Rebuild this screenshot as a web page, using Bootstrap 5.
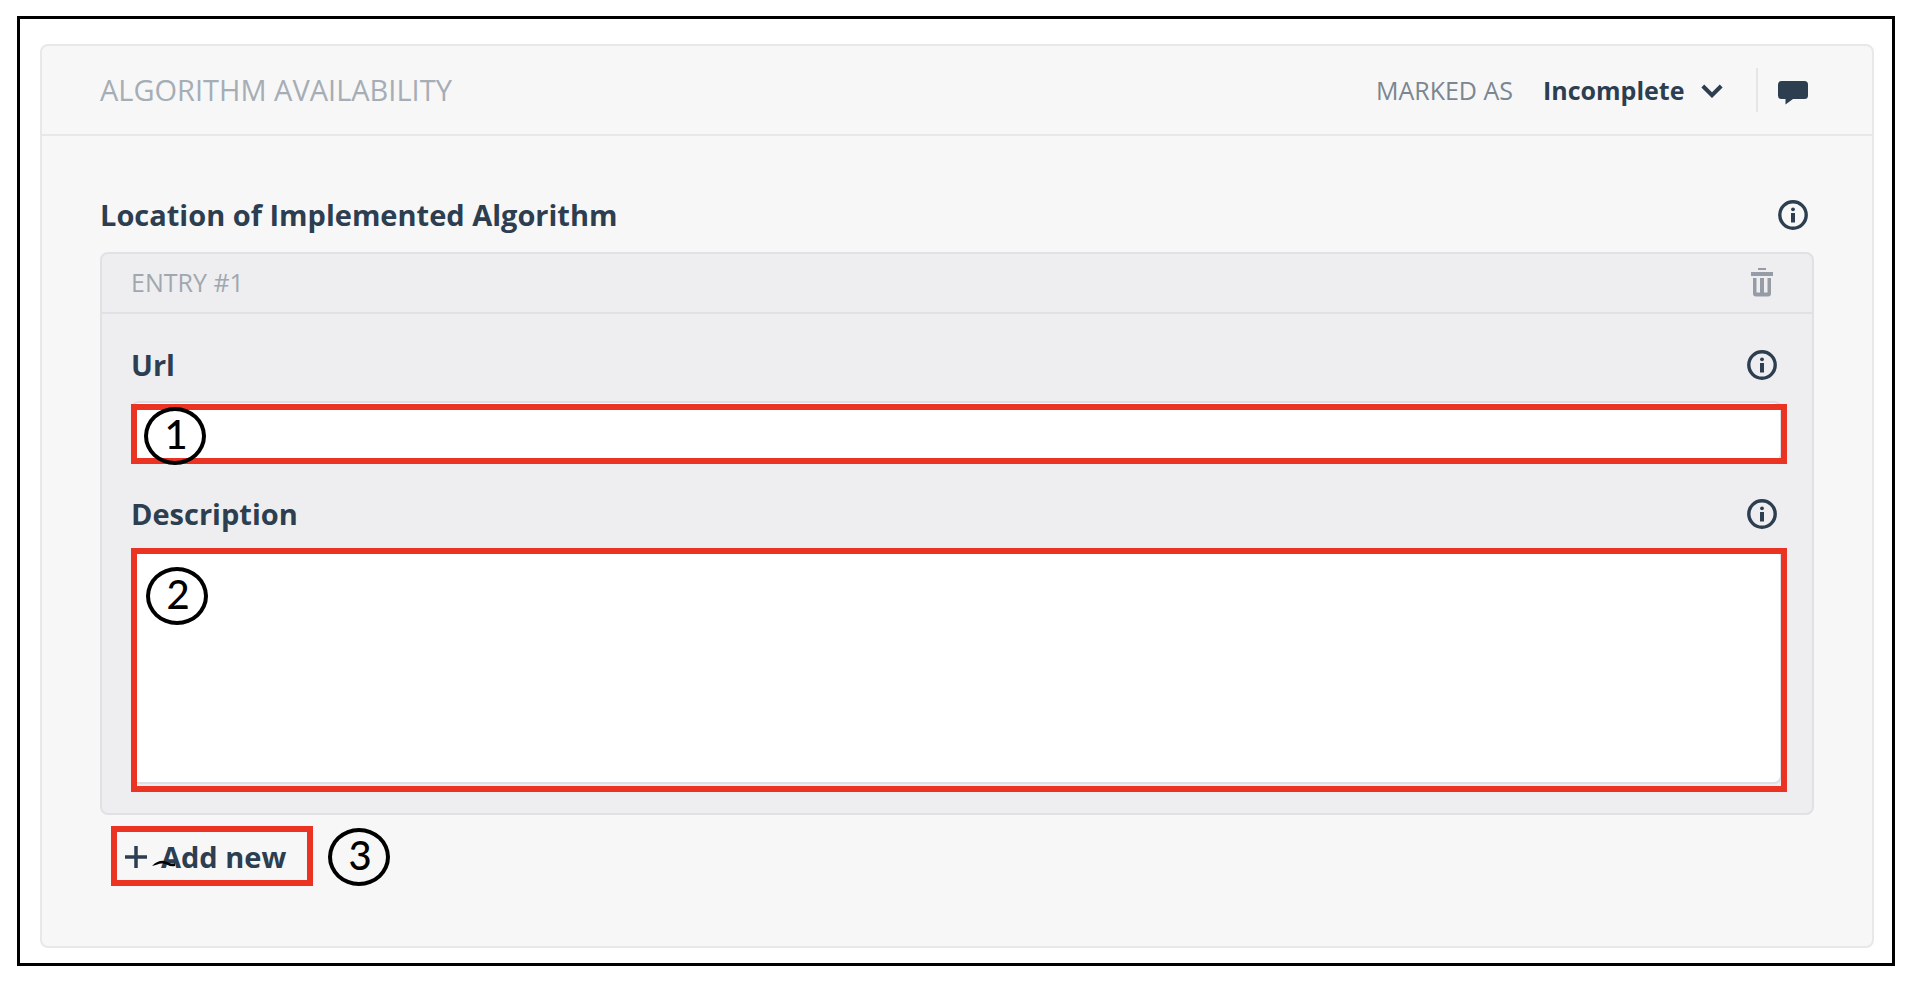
<!DOCTYPE html>
<html lang="en">
<head>
<meta charset="utf-8">
<meta name="viewport" content="width=device-width, initial-scale=1">
<title>Algorithm availability</title>
<link href="https://cdn.jsdelivr.net/npm/bootstrap@5.3.0/dist/css/bootstrap.min.css" rel="stylesheet">
<style>
  :root { --ink: #2c3e50; --mark: #eb3323; }
  body { font-family: "Open Sans", sans-serif; font-size: 29px; line-height: 36px; color: var(--ink); background: #fff; padding: 16px 19px 20px 17px; }
  .frame { border: 3px solid #000; padding: 25px 18px 15px 20px; }
  .panel { --bs-card-bg: #f7f7f8; border: 2px solid #e6e8ea; border-radius: 8px; color: var(--ink); }
  .panel-head { height: 90px; padding: 0 64px 0 58px; border-bottom: 2px solid #e6e8ea; }
  .panel-title { font-size: 29px; line-height: 36px; color: #a6adb4; }
  .panel-body { padding: 61px 58px 60px; }
  .status-label { font-size: 25px; color: #7b8690; margin-right: 30px; }
  .status-select { appearance: none; display: block; border: 0; padding: 0 36px 0 0; background: transparent; color: var(--ink); font-size: 25px; line-height: 36px; font-weight: 700; width: 181px; }
  .status-arrow { right: 1px; top: 12px; pointer-events: none; }
  .divider { width: 2px; height: 44px; background: #e4e6e8; margin: 0 20px 0 32px; }
  .plain { border: 0; padding: 0; background: none; color: var(--ink); display: flex; }
  .title-row { padding-right: 6px; }
  .label-row { padding-right: 5px; }
  .field-title { font-size: 29px; line-height: 36px; font-weight: 700; }
  .entry { border: 2px solid #dfe1e4; border-radius: 8px; background: #eeeef0; margin-top: 19px; }
  .entry-head { height: 60px; padding: 0 38px 2px 29px; border-bottom: 2px solid #dfe1e4; font-size: 25px; color: #a0a7af; }
  .entry-body { padding: 33px 30px 29px 29px; }
  .field { position: relative; margin-top: 18px; }
  .field + .label-row { margin-top: 34px; }
  .field::after { content: ""; position: absolute; inset: 3px -5px -2px 0; border: 6px solid var(--mark); pointer-events: none; }
  .field-area { margin-top: 17px; }
  .field-area::after { inset: -1px -5px -8px 0; }
  .field .form-control { border: 2px solid #dcdfe3; border-radius: 8px; background: #fff; font-size: 25px; padding: 8px 88px; resize: none; }
  .field input.form-control { height: 61px; }
  .field textarea.form-control { height: 235px; display: block; }
  .step { width: 62px; height: 58px; border: 4px solid #000; border-radius: 50%; color: #000; font-family: Lato, sans-serif; font-weight: 500; font-size: 40px; line-height: 46px; padding-left: 2px; text-align: center; }
  .step-over { position: absolute; z-index: 1; left: 13px; top: 6px; }
  .field-area .step-over { left: 15px; top: 18px; }
  .actions { margin: 11px 0 0 11px; gap: 15px; }
  .add-btn { width: 202px; height: 60px; border: 6px solid var(--mark); background: none; padding: 2px 0 0 8px; color: var(--ink); font-size: 29px; font-weight: 700; text-align: left; position: relative; gap: 14px; white-space: nowrap; }
  .scribble { position: absolute; left: 35px; top: 27px; }
</style>
</head>
<body>
<svg width="0" height="0" class="position-absolute" aria-hidden="true">
  <symbol id="info" viewBox="0 0 30 30">
    <circle cx="15" cy="15" r="13.2" fill="none" stroke="currentColor" stroke-width="3.4"/>
    <circle cx="15" cy="9.3" r="1.9" fill="currentColor"/>
    <path d="M13 13h4v9.500h-4z" fill="currentColor"/>
  </symbol>
</svg>
<main class="frame">
  <section class="card panel">
    <header class="panel-head d-flex align-items-center">
      <h1 class="panel-title fw-normal mb-0 me-auto">ALGORITHM AVAILABILITY</h1>
      <label class="status-label" for="status">MARKED AS</label>
      <div class="position-relative">
        <select id="status" class="status-select"><option>Incomplete</option><option>Complete</option></select>
        <svg class="status-arrow position-absolute" width="22" height="14" viewBox="0 0 22 14" aria-hidden="true"><path d="M1.800 2 11 11.200 20.200 2" fill="none" stroke="#2c3e50" stroke-width="4"/></svg>
      </div>
      <div class="divider"></div>
      <button class="plain" type="button" aria-label="Comments">
        <svg width="30" height="30" viewBox="0 0 30 30"><path d="M3.500 6h23A3.500 3.500 0 0 1 30 9.500V20.500A3.500 3.500 0 0 1 26.500 24H15L7.500 29.500V24H3.500A3.500 3.500 0 0 1 0 20.500V9.500A3.500 3.500 0 0 1 3.500 6z" fill="currentColor"/></svg>
      </button>
    </header>
    <div class="panel-body">
      <div class="title-row d-flex align-items-center justify-content-between">
        <h2 class="field-title mb-0">Location of Implemented Algorithm</h2>
        <button class="plain" type="button" aria-label="About location"><svg width="30" height="30"><use href="#info"/></svg></button>
      </div>
      <div class="entry">
        <div class="entry-head d-flex align-items-center justify-content-between">
          <span>ENTRY #1</span>
          <button class="plain" type="button" aria-label="Delete entry">
            <svg width="24" height="30" viewBox="0 0 24 30" fill="#959ca5"><path d="M8 1h8v2H8zM1 5h22v4H1z"/><path d="M3 11h3.500v14.500h3.500V11h4v14.500h3.500V11H21v15.500a3 3 0 0 1-3 3H6a3 3 0 0 1-3-3z"/></svg>
          </button>
        </div>
        <div class="entry-body">
          <div class="label-row d-flex align-items-center justify-content-between">
            <label class="field-title" for="url">Url</label>
            <button class="plain" type="button" aria-label="About url"><svg width="30" height="30"><use href="#info"/></svg></button>
          </div>
          <div class="field">
            <input id="url" class="form-control" type="text">
            <span class="step step-over">1</span>
          </div>
          <div class="label-row d-flex align-items-center justify-content-between">
            <label class="field-title" for="description">Description</label>
            <button class="plain" type="button" aria-label="About description"><svg width="30" height="30"><use href="#info"/></svg></button>
          </div>
          <div class="field field-area">
            <textarea id="description" class="form-control"></textarea>
            <span class="step step-over">2</span>
          </div>
        </div>
      </div>
      <div class="actions d-flex align-items-end">
        <button class="add-btn d-flex align-items-center" type="button">
          <svg width="22" height="22" viewBox="0 0 22 22" aria-hidden="true"><path d="M11 0v22M0 11h22" stroke="currentColor" stroke-width="3.500"/></svg>
          Add new
          <svg class="scribble" width="24" height="9" viewBox="0 0 24 9" aria-hidden="true"><path d="M0 7C5 2 10 1 14 2.500S20 5.500 23 4V7C18 8.500 15 5 11 4.500S5 6 0 7z" fill="#000"/></svg>
        </button>
        <span class="step">3</span>
      </div>
    </div>
  </section>
</main>
<script src="https://cdn.jsdelivr.net/npm/bootstrap@5.3.0/dist/js/bootstrap.bundle.min.js"></script>
</body>
</html>
